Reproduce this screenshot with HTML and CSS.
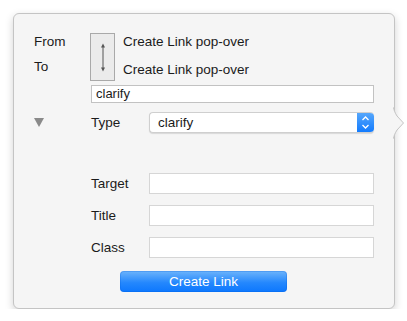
FILE: index.html
```html
<!DOCTYPE html>
<html>
<head>
<meta charset="utf-8">
<link rel="stylesheet" href="styles.css">
</head>
<body>
<div class="popover">
  <svg class="beak" width="12" height="32" viewBox="0 0 12 32"><path d="M0 0 C1 3 2 6 4 9 L10.5 16 L4 23 C2 26 1 29 0 32" fill="#f5f5f5" stroke="#c4c4c4" stroke-width="1"/><rect x="-1" y="0" width="1.2" height="32" fill="#f5f5f5"/></svg>
  <div class="endpoints">
    <div class="ep-labels"><span>From</span><span>To</span></div>
    <div class="ep-box">
      <svg width="23" height="46" viewBox="0 0 23 46"><line x1="12" y1="12" x2="12" y2="35" stroke="#555" stroke-width="1"/><path d="M10 13.5 L12 9.5 L14 13.5 Z M10 33.5 L12 37.5 L14 33.5 Z" fill="#555"/></svg>
    </div>
    <div class="ep-names"><span>Create Link pop-over</span><span>Create Link pop-over</span></div>
  </div>
  <div class="field field-name">clarify</div>
  <div class="type-row">
    <span class="disclosure"></span>
    <span class="label">Type</span>
    <div class="select">
      <span class="select-value">clarify</span>
      <span class="stepper"><svg width="17" height="21" viewBox="0 0 17 21"><path d="M5.5 8 L8.5 5 L11.5 8 M5.5 13 L8.5 16 L11.5 13" fill="none" stroke="#fff" stroke-width="1.3"/></svg></span>
    </div>
  </div>
  <div class="form-rows">
    <div class="form-row"><span class="label">Target</span><div class="field field-text"></div></div>
    <div class="form-row"><span class="label">Title</span><div class="field field-text"></div></div>
    <div class="form-row"><span class="label">Class</span><div class="field field-text"></div></div>
  </div>
  <div class="btn">Create Link</div>
</div>
</body>
</html>
```
FILE: styles.css
```css
html, body {
  margin: 0;
  padding: 0;
  background: #ffffff;
}
body {
  font-family: "Liberation Sans", Arial, sans-serif;
  font-size: 13.5px;
  color: #1b1b1b;
}
.popover {
  position: relative;
  margin: 13px 0 0 13px;
  width: 382px;
  box-sizing: border-box;
  padding: 19px 20px 16px 20px;
  background: #f5f5f5;
  border: 1px solid #c4c4c4;
  border-radius: 6px;
  box-shadow: 0 3px 9px rgba(0, 0, 0, 0.18);
}
.beak {
  position: absolute;
  right: -11px;
  top: 93px;
  overflow: visible;
}
.endpoints {
  display: flex;
  height: 48px;
}
.ep-labels {
  width: 56px;
  display: flex;
  flex-direction: column;
  gap: 9px;
  padding-top: 1px;
  line-height: 16px;
}
.ep-box {
  width: 25px;
  height: 48px;
  box-sizing: border-box;
  border: 1px solid #a9a9a9;
  background: #ebebeb;
}
.ep-box svg {
  display: block;
}
.ep-names {
  margin-left: 8px;
  display: flex;
  flex-direction: column;
  gap: 12px;
  padding-top: 1px;
  line-height: 16px;
}
.field {
  box-sizing: border-box;
  background: #ffffff;
  border: 1px solid #d6d6d6;
}
.field-name {
  margin: 4px 0 0 57px;
  height: 18px;
  border-color: #c2c2c2;
  line-height: 16px;
  padding-left: 4px;
  font-size: 13px;
}
.type-row {
  display: flex;
  align-items: center;
  margin-top: 9px;
  height: 21px;
}
.disclosure {
  width: 0;
  height: 0;
  border-left: 5px solid transparent;
  border-right: 5px solid transparent;
  border-top: 9px solid #8a8a8a;
  margin-left: 0;
  margin-top: -1px;
}
.type-row .label {
  margin-left: 47px;
  width: 58px;
}
.select {
  flex: 1;
  display: flex;
  height: 21px;
  box-sizing: border-box;
  background: #ffffff;
  border: 1px solid #cfcfcf;
  border-right: none;
  border-radius: 4px;
  box-shadow: 0 1px 1px rgba(0, 0, 0, 0.12);
  overflow: hidden;
}
.select-value {
  flex: 1;
  padding-left: 8px;
  line-height: 19px;
}
.stepper {
  width: 17px;
  margin: -1px 0;
  background: linear-gradient(#5aa9fb, #0f79fe);
  border-radius: 0 4px 4px 0;
}
.stepper svg {
  display: block;
}
.form-rows {
  margin-top: 40px;
  display: flex;
  flex-direction: column;
  gap: 11px;
}
.form-row {
  display: flex;
  align-items: center;
  padding-left: 57px;
}
.form-row .label {
  width: 58px;
}
.field-text {
  flex: 1;
  height: 21px;
}
.btn {
  margin: 13px 0 0 86px;
  width: 167px;
  height: 21px;
  box-sizing: border-box;
  border-radius: 4px;
  background: linear-gradient(#6db4fb, #2588fd 55%, #0c77fe);
  box-shadow: inset 0 0 0 1px rgba(0, 90, 220, 0.25);
  color: #ffffff;
  text-align: center;
  line-height: 21px;
}
```
